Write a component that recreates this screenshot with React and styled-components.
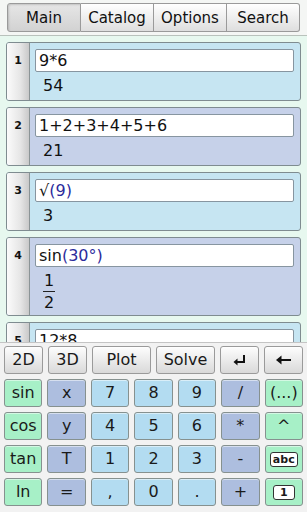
import React from "react";
import styled, { createGlobalStyle } from "styled-components";

const Global = createGlobalStyle`
  html, body {
    margin: 0;
    padding: 0;
    background: #f4f4f4;
  }
  body {
    font-family: "DejaVu Sans", Verdana, sans-serif;
    color: #111;
  }
`;

const Screen = styled.div`
  width: 307px;
  height: 512px;
  display: flex;
  flex-direction: column;
  overflow: hidden;
  background: #f3f5f3;
`;

const TabBar = styled.div`
  display: flex;
  padding: 3px 7px 3px 7px;
  background: #f4f6f4;
  border-bottom: 1px solid #b9c2bc;
`;

const Tab = styled.div`
  flex: 1;
  height: 27px;
  display: flex;
  align-items: center;
  justify-content: center;
  font-size: 15px;
  border: 1px solid #9a9a9a;
  border-left-width: ${(p) => (p.$first ? "1px" : "0")};
  border-radius: ${(p) => (p.$first ? "3px 0 0 3px" : p.$last ? "0 3px 3px 0" : "0")};
  background: ${(p) =>
    p.$active
      ? "linear-gradient(#e6e6e6, #d2d2d2)"
      : "linear-gradient(#ffffff, #dedede)"};
  box-shadow: ${(p) => (p.$active ? "inset 1px 1px 2px rgba(0,0,0,0.15)" : "none")};
`;

const History = styled.div`
  flex: 1;
  background: #e7f8ef;
  padding: 6px 6px 0 6px;
  display: flex;
  flex-direction: column;
  gap: 6px;
  overflow: hidden;
`;

const Card = styled.div`
  display: flex;
  flex-shrink: 0;
  border: 1px solid #7f8c90;
  border-radius: 3px;
  overflow: hidden;
  background: ${(p) => (p.$alt ? "#c6d1e9" : "#c6e5f2")};
`;

const Num = styled.div`
  width: 23px;
  flex-shrink: 0;
  border-right: 1px solid #8b9496;
  background: linear-gradient(90deg, #fbfbfb, #e6e6e6 60%, #c9c9c9);
  font-size: 11px;
  font-weight: bold;
  text-align: center;
  padding-top: 11px;
  box-sizing: border-box;
`;

const Body = styled.div`
  flex: 1;
  padding: 6px 6px 4px 5px;
  display: flex;
  flex-direction: column;
`;

const Input = styled.div`
  height: 21px;
  background: #fff;
  border: 1px solid #8795a0;
  border-radius: 2px;
  font-size: 16px;
  line-height: 21px;
  padding-left: 3px;
  white-space: nowrap;
`;

const Arg = styled.span`
  color: #2b2b9c;
`;

const Result = styled.div`
  font-size: 16px;
  padding: 4px 0 0 8px;
  line-height: 20px;
  min-height: 20px;
`;

const Frac = styled.div`
  display: inline-flex;
  flex-direction: column;
  align-items: center;
  font-size: 16px;
  line-height: 17px;
`;

const FracLine = styled.div`
  width: 12px;
  height: 1px;
  background: #222;
  margin: 2px 0;
`;

const Keyboard = styled.div`
  flex-shrink: 0;
  background: #f2f2f2;
  border-top: 1px solid #c4c4c4;
  padding: 3px 4px 6px 4px;
  display: flex;
  flex-direction: column;
  gap: 5px;
`;

const KeyRow = styled.div`
  display: grid;
  grid-template-columns: ${(p) => p.$cols || "repeat(7, 1fr)"};
  gap: 5px;
`;

const palette = {
  grey: "linear-gradient(#fdfdfd, #d9d9d9)",
  green: "#a7f0c7",
  slate: "#adbedf",
  blue: "#b3dcf1",
};

const Key = styled.div`
  box-sizing: border-box;
  height: 28px;
  display: flex;
  align-items: center;
  justify-content: center;
  font-size: 16px;
  line-height: 18px;
  color: #1a1a1a;
  border: 1px solid ${(p) => (p.$kind === "grey" ? "#9a9a9a" : "#86918f")};
  border-radius: 3px;
  background: ${(p) => palette[p.$kind]};
  box-shadow: inset 0 1px 0 rgba(255, 255, 255, 0.5);
`;

const Badge = styled.span`
  background: #fff;
  border: 1px solid #333;
  border-radius: 3px;
  font-size: 11px;
  font-weight: bold;
  line-height: 13px;
  padding: 0 ${(p) => (p.$wide ? "2px" : "6px")};
`;

const EnterIcon = () => (
  <svg width="16" height="14" viewBox="0 0 16 14">
    <path d="M12 2 V9 H4" fill="none" stroke="#111" strokeWidth="2" />
    <path d="M1.5 9 L5.5 5.5 V12.5 Z" fill="#111" />
  </svg>
);

const BackIcon = () => (
  <svg width="18" height="12" viewBox="0 0 18 12">
    <path d="M5 6 H16" stroke="#111" strokeWidth="2" />
    <path d="M1 6 L6.5 1.5 V10.5 Z" fill="#111" />
  </svg>
);

const entries = [
  { n: 1, input: "9*6", result: "54" },
  { n: 2, input: "1+2+3+4+5+6", result: "21", alt: true },
  { n: 3, input: <>√<Arg>(9)</Arg></>, result: "3" },
  {
    n: 4,
    input: <>sin<Arg>(30°)</Arg></>,
    result: (
      <Frac>
        <span>1</span>
        <FracLine />
        <span>2</span>
      </Frac>
    ),
    alt: true,
  },
  { n: 5, input: "12*8", result: "" },
];

const rows = [
  [["sin", "green"], ["x", "slate"], ["7", "blue"], ["8", "blue"], ["9", "blue"], ["/", "slate"], ["(...)", "green"]],
  [["cos", "green"], ["y", "slate"], ["4", "blue"], ["5", "blue"], ["6", "blue"], ["*", "slate"], ["^", "green"]],
  [["tan", "green"], ["T", "slate"], ["1", "blue"], ["2", "blue"], ["3", "blue"], ["-", "slate"], [<Badge $wide>abc</Badge>, "green"]],
  [["ln", "green"], ["=", "slate"], [",", "blue"], ["0", "blue"], [".", "blue"], ["+", "slate"], [<Badge>1</Badge>, "green"]],
];

export default function App() {
  return (
    <>
      <Global />
      <Screen>
        <TabBar>
          <Tab $first $active>Main</Tab>
          <Tab>Catalog</Tab>
          <Tab>Options</Tab>
          <Tab $last>Search</Tab>
        </TabBar>
        <History>
          {entries.map((e) => (
            <Card key={e.n} $alt={e.alt}>
              <Num>{e.n}</Num>
              <Body>
                <Input>{e.input}</Input>
                <Result>{e.result}</Result>
              </Body>
            </Card>
          ))}
        </History>
        <Keyboard>
          <KeyRow $cols="39px 39px 1fr 1fr 39px 39px">
            <Key $kind="grey">2D</Key>
            <Key $kind="grey">3D</Key>
            <Key $kind="grey">Plot</Key>
            <Key $kind="grey">Solve</Key>
            <Key $kind="grey"><EnterIcon /></Key>
            <Key $kind="grey"><BackIcon /></Key>
          </KeyRow>
          {rows.map((r, i) => (
            <KeyRow key={i}>
              {r.map(([label, kind], j) => (
                <Key key={j} $kind={kind}>{label}</Key>
              ))}
            </KeyRow>
          ))}
        </Keyboard>
      </Screen>
    </>
  );
}
